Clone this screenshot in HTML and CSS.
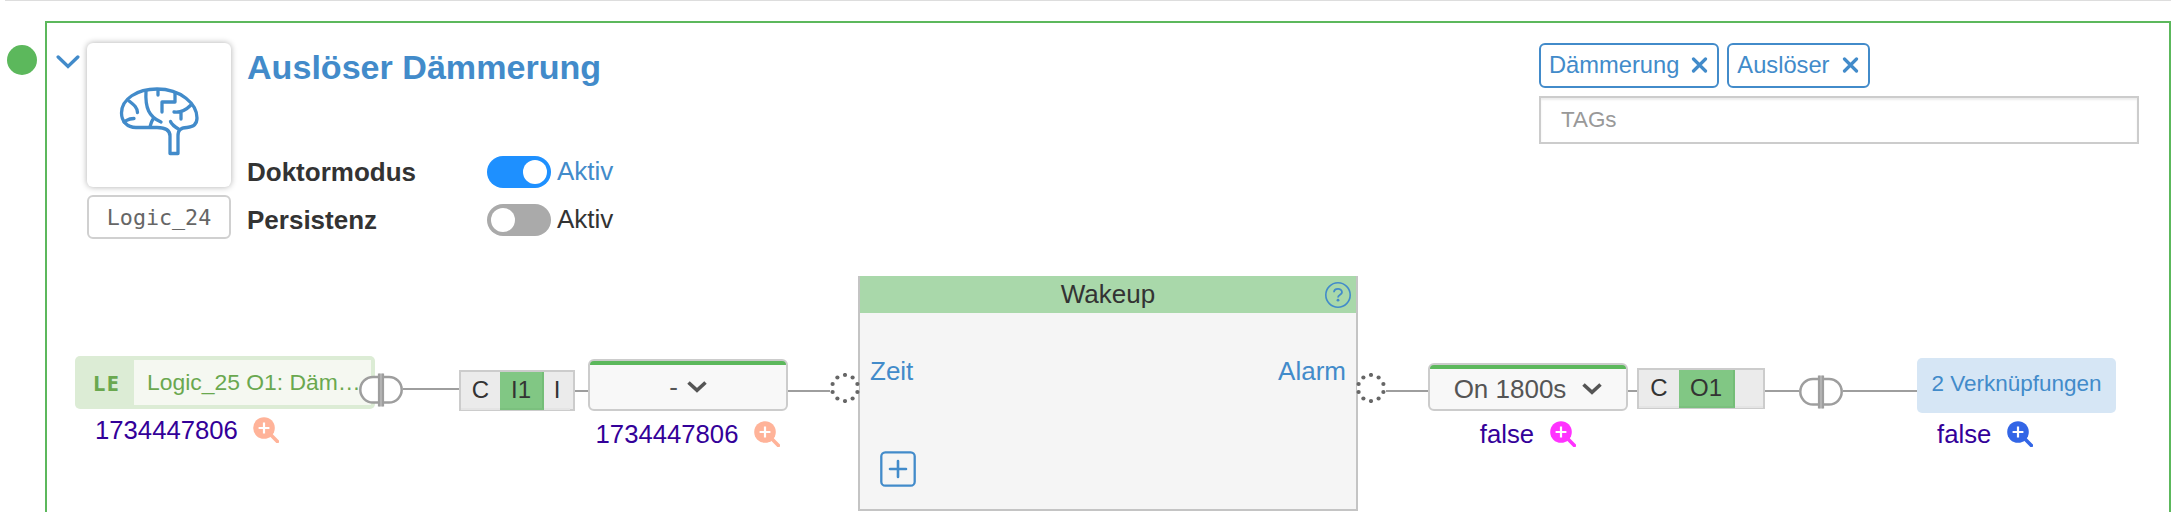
FILE: index.html
```html
<!DOCTYPE html>
<html lang="de">
<head>
    <meta charset="UTF-8">
    <meta name="viewport" content="width=device-width, initial-scale=1.0">
    <title>Auslöser Dämmerung</title>
    <link rel="stylesheet" href="styles.css">
</head>
<body>

<!-- Symbole -->
<svg class="defs" width="0" height="0">
    <symbol id="zoom" viewBox="0 0 26 26">
        <circle cx="11" cy="11" r="10.8" fill="currentColor"/>
        <path d="M18 18 L24.4 24.4" stroke="currentColor" stroke-width="3.6" stroke-linecap="round"/>
        <path d="M11 5.6V16.4M5.6 11H16.4" stroke="#fff" stroke-width="2.2"/>
    </symbol>
    <symbol id="coupler" viewBox="0 0 44 34">
        <rect x="1.3" y="4" width="41.4" height="25.5" rx="12.7" fill="#fff" stroke="#9e9e9e" stroke-width="2.5"/>
        <path d="M22 .5V33.5" stroke="#b5b5b5" stroke-width="3"/>
        <path d="M20 .5V33.5M24 .5V33.5" stroke="#9e9e9e" stroke-width="2.2"/>
    </symbol>
    <symbol id="port" viewBox="0 0 30 30">
        <circle cx="15" cy="15" r="14" fill="#fff"/>
        <g fill="#666">
            <circle cx="15" cy="2" r="2.1"/><circle cx="22.6" cy="4.5" r="2.1"/><circle cx="27.4" cy="11" r="2.1"/>
            <circle cx="27.4" cy="19" r="2.1"/><circle cx="22.6" cy="25.5" r="2.1"/><circle cx="15" cy="28" r="2.1"/>
            <circle cx="7.4" cy="25.5" r="2.1"/><circle cx="2.6" cy="19" r="2.1"/><circle cx="2.6" cy="11" r="2.1"/>
            <circle cx="7.4" cy="4.5" r="2.1"/>
        </g>
    </symbol>
    <symbol id="arrow" viewBox="0 0 20 12">
        <path d="M1.5 1.5L10 9.4L18.5 1.5" fill="none" stroke="#555" stroke-width="3.6"/>
    </symbol>
</svg>

<div class="page">
    <span class="status"></span>
    <div class="panel">

        <!-- Kopfbereich -->
        <div class="head">
            <svg class="collapse" viewBox="0 0 24 14"><path d="M2.2 2L12 11.5L21.8 2" fill="none" stroke="#428bca" stroke-width="3.4" stroke-linecap="round"/></svg>
            <div class="ident">
                <div class="card">
                    <svg width="80" height="70" viewBox="0 0 80 70" fill="none" stroke="#428bca" stroke-width="3.3" stroke-linecap="round" stroke-linejoin="round">
                        <path d="M51 67.500V50C51 43.500 45 41.500 38 41.500H17C8 41.500 2.500 35 2.500 27C2.500 13 18 3 38 3C62 3 78 18 78 32C78 38 74 41 68 41.500C61 42 59 44 59 50V67.500Z"/>
                        <path d="M10 15C15 19 18 21 18.500 26.500M5 36C9 34 9 32.500 15 32.500M27 5C26 22 30 31 42 36M35 32C33 34 32 37 31 41M39 4V9M56 7V16H43V26M55 26C62 27 67 24 72 19M62 26V33M51.500 35.500C53 39 56 41 59.500 43"/>
                    </svg>
                </div>
                <div class="id-label">Logic_24</div>
            </div>
            <div class="info">
                <h1>Auslöser Dämmerung</h1>
                <div class="option">
                    <span class="name">Doktormodus</span>
                    <span class="switch on"></span>
                    <span class="state blue">Aktiv</span>
                </div>
                <div class="option">
                    <span class="name">Persistenz</span>
                    <span class="switch"></span>
                    <span class="state">Aktiv</span>
                </div>
            </div>
            <div class="tags">
                <div class="tag-list">
                    <span class="tag"><span class="tag-text">Dämmerung</span><svg viewBox="0 0 16 16"><path d="M2 2L14 14M14 2L2 14" stroke="#428bca" stroke-width="3.2" stroke-linecap="round"/></svg></span>
                    <span class="tag"><span class="tag-text">Auslöser</span><svg viewBox="0 0 16 16"><path d="M2 2L14 14M14 2L2 14" stroke="#428bca" stroke-width="3.2" stroke-linecap="round"/></svg></span>
                </div>
                <input class="tag-input" type="text" placeholder="TAGs">
            </div>
        </div>

        <!-- Logik -->
        <div class="flow">
            <div class="source">
                <div class="link-in">
                    <b>LE</b>
                    <span>Logic_25 O1: Däm…</span>
                </div>
                <div class="value"><span>1734447806</span><svg class="zoom peach"><use href="#zoom"/></svg></div>
            </div>
            <svg class="coupler first"><use href="#coupler"/></svg>
            <i class="wire w1"></i>
            <div class="pins in"><span>C</span><span class="active">I1</span><span>I</span></div>
            <i class="wire w2"></i>
            <div class="filter in">
                <div class="select"><span>-</span><svg><use href="#arrow"/></svg></div>
                <div class="value"><span>1734447806</span><svg class="zoom peach"><use href="#zoom"/></svg></div>
            </div>
            <i class="wire w3"></i>
            <svg class="port left"><use href="#port"/></svg>
            <div class="block">
                <div class="block-head">
                    <span>Wakeup</span>
                    <svg class="help" viewBox="0 0 26 26"><circle cx="13" cy="13" r="12.200" fill="none" stroke="#428bca" stroke-width="1.600"/><path d="M9 10.300C9 5.800 17 5.800 17 10.200C17 12.800 13 12.600 13 15.400" fill="none" stroke="#428bca" stroke-width="1.800"/><circle cx="13" cy="18.200" r="1.400" fill="#428bca"/></svg>
                </div>
                <div class="block-io"><span>Zeit</span><span>Alarm</span></div>
                <svg class="add" viewBox="0 0 36 36"><rect x="1.300" y="1.300" width="33.400" height="33.400" rx="4" fill="none" stroke="#428bca" stroke-width="2.300"/><path d="M18 10V26M10 18H26" stroke="#428bca" stroke-width="2.600" stroke-linecap="round"/></svg>
            </div>
            <svg class="port right"><use href="#port"/></svg>
            <i class="wire w4"></i>
            <div class="filter out">
                <div class="select"><span>On 1800s</span><svg><use href="#arrow"/></svg></div>
                <div class="value"><span>false</span><svg class="zoom pink"><use href="#zoom"/></svg></div>
            </div>
            <i class="wire w5"></i>
            <div class="pins out"><span>C</span><span class="active">O1</span><span></span></div>
            <i class="wire w6"></i>
            <svg class="coupler"><use href="#coupler"/></svg>
            <i class="wire w7"></i>
            <div class="target">
                <div class="link-out">2 Verknüpfungen</div>
                <div class="value"><span>false</span><svg class="zoom blue"><use href="#zoom"/></svg></div>
            </div>
        </div>
    </div>
</div>
</body>
</html>
```
FILE: styles.css
```css
* {
    box-sizing: border-box;
}
body {
    margin: 0;
    height: 512px;
    background-color: #fff;
    font-family: "Liberation Sans", Arial, sans-serif;
    font-size: 26px;
    color: #333;
}
svg {
    display: block;
    flex: none;
}
.defs {
    display: none;
}

/* Rahmen */
.page {
    display: flex;
    align-items: flex-start;
    height: 512px;
    margin: 0 7px 0 5px;
    padding-left: 2px;
    border-top: 1px solid #ddd;
}
.status {
    flex: none;
    width: 30px;
    height: 30px;
    margin-top: 44px;
    border-radius: 50%;
    background-color: #5cb85c;
}
.panel {
    flex: 1;
    height: 491px;
    margin: 20px 0 0 8px;
    border: 2px solid #5cb85c;
    border-bottom: none;
}

/* Kopfbereich */
.head {
    display: flex;
    align-items: flex-start;
    height: 253px;
    padding: 20px 30px 0 9px;
}
.collapse {
    width: 24px;
    height: 14px;
    margin-top: 12px;
}
.ident {
    width: 144px;
    margin-left: 7px;
}
.card {
    display: flex;
    height: 144px;
    padding: 43px 0 0 32px;
    border-radius: 6px;
    box-shadow: 0 0 6px rgba(0, 0, 0, .32);
}
.id-label {
    height: 44px;
    margin-top: 8px;
    border: 2px solid #d0d0d0;
    border-radius: 6px;
    font-family: "DejaVu Sans Mono", monospace;
    font-size: 21.7px;
    line-height: 41px;
    text-align: center;
    color: #666;
}
.info {
    margin-left: 16px;
}
h1 {
    height: 113px;
    margin: 0;
    font-size: 34.1px;
    line-height: 48px;
    color: #428bca;
    white-space: nowrap;
}
.option {
    display: flex;
    height: 32px;
    margin-bottom: 16px;
    line-height: 31px;
}
.name {
    width: 240px;
    padding-top: 1px;
    font-weight: bold;
}
.switch {
    width: 64px;
    height: 32px;
    padding: 4px;
    border-radius: 16px;
    background-color: #aaa;
}
.switch::before {
    content: "";
    display: block;
    width: 24px;
    height: 24px;
    border-radius: 50%;
    background-color: #fff;
}
.switch.on {
    background-color: #1e90ff;
}
.switch.on::before {
    margin-left: 32px;
}
.state {
    margin-left: 6px;
}
.state.blue {
    color: #428bca;
}

/* TAGs */
.tags {
    width: 600px;
    margin-left: auto;
}
.tag-list {
    display: flex;
    gap: 8px;
}
.tag {
    display: flex;
    align-items: center;
    height: 45px;
    padding: 0 9px 0 8px;
    border: 2px solid #428bca;
    border-radius: 6px;
    font-size: 23.7px;
    color: #428bca;
}
.tag svg {
    width: 17px;
    height: 16px;
    margin-left: 12px;
    margin-bottom: 1px;
}
.tag-input {
    display: block;
    width: 100%;
    height: 48px;
    margin-top: 8px;
    padding: 0 20px 1px;
    border: 2px solid #ccc;
    box-shadow: inset 0 2px 2px rgba(0, 0, 0, .075);
    font-family: inherit;
    font-size: 22.4px;
}
.tag-input::placeholder {
    color: #999;
}

/* Logik */
.flow {
    display: flex;
    align-items: flex-start;
    padding-left: 28px;
}
.flow > * {
    flex: none;
}
.wire {
    height: 2px;
    margin-top: 114px;
    background-color: #9e9e9e;
}
.w1 { width: 56px; margin-top: 112px; }
.w2 { width: 13px; }
.w3 { width: 42px; }
.w4 { width: 42px; }
.w5 { width: 9px; }
.w6 { width: 34px; }
.w7 { width: 74px; }
.value {
    display: flex;
    justify-content: center;
    align-items: center;
    height: 30px;
    font-size: 25.7px;
    color: #330099;
}
.zoom {
    width: 26px;
    height: 26px;
    margin-left: 16px;
}
.peach { color: #ffb399; }
.pink { color: #ff33ff; }
.zoom.blue { color: #3366e6; }

.source {
    width: 300px;
    margin-top: 80px;
}
.source .value {
    justify-content: flex-start;
    margin-top: 6px;
    padding-left: 20px;
}
.source .zoom {
    margin-left: 15px;
}
.link-in {
    display: flex;
    height: 53px;
    padding: 4px;
    border-radius: 5px;
    background-color: #dcecd5;
    color: #6aa84f;
    font-size: 22.9px;
}
.link-in b {
    width: 55px;
    padding-left: 14px;
    font-family: "Open Sans", sans-serif;
    font-size: 22px;
    line-height: 44px;
    letter-spacing: 1px;
}
.link-in span {
    flex: 1;
    padding-left: 13px;
    background-color: #f5f8f1;
    line-height: 44px;
    white-space: nowrap;
}
.coupler {
    width: 44px;
    height: 34px;
    margin-top: 99px;
}
.coupler.first {
    position: relative;
    margin: 97px 0 0 -16px;
}
.pins {
    display: grid;
    height: 41px;
    border: 2px solid #ccc;
    background-color: #ebebeb;
    font-size: 24px;
    line-height: 36px;
    text-align: center;
}
.pins span {
    border-bottom: 2px solid #e4e4e4;
}
.pins .active {
    background-color: #81c784;
    border-color: #7bc07e;
    border-right: 2px solid #74bd77;
}
.pins.in {
    width: 116px;
    margin-top: 94px;
    grid-template-columns: 39px 44px 26px;
}
.pins.out {
    width: 128px;
    margin-top: 92px;
    grid-template-columns: 40px 56px 28px;
}
.filter {
    width: 200px;
}
.filter .value {
    margin-top: 8px;
}
.filter.in { margin-top: 83px; }
.filter.out { margin-top: 87px; }
.select {
    display: flex;
    justify-content: center;
    align-items: center;
    height: 48px;
    padding-top: 4px;
    border: 2px solid #ccc;
    border-radius: 6px;
    background: linear-gradient(#5cb85c 4px, #f8f8f8 4px);
    color: #555;
}
.select svg {
    width: 20px;
    height: 12px;
    margin-left: 16px;
    margin-bottom: 1px;
}
.filter.in .select {
    height: 52px;
}
.filter.in .select svg {
    margin-left: 9px;
}
.port {
    position: relative;
    width: 30px;
    height: 30px;
}
.port.left { margin: 97px -2px 0 0; }
.port.right { margin: 97px 0 0 -2px; }
.block {
    width: 500px;
    height: 235px;
    border: 2px solid #c4c4c4;
    border-top: none;
    background-color: #f5f5f5;
}
.block-head {
    display: grid;
    grid-template-columns: 1fr auto 1fr;
    height: 37px;
    background-color: #a9d8aa;
    line-height: 36px;
}
.block-head span {
    grid-column: 2;
}
.help {
    width: 26px;
    height: 26px;
    margin: 6px 5px 0 auto;
}
.block-io {
    display: flex;
    justify-content: space-between;
    padding: 42px 10px 0;
    line-height: 32px;
    color: #428bca;
}
.add {
    width: 36px;
    height: 36px;
    margin: 64px 0 0 20px;
}
.target {
    width: 199px;
    margin-top: 82px;
}
.target .value {
    justify-content: flex-start;
    margin-top: 6px;
    padding-left: 20px;
}
.link-out {
    height: 55px;
    border-radius: 5px;
    background-color: #d6e6f5;
    font-size: 22.5px;
    line-height: 51px;
    text-align: center;
    color: #428bca;
}
```
